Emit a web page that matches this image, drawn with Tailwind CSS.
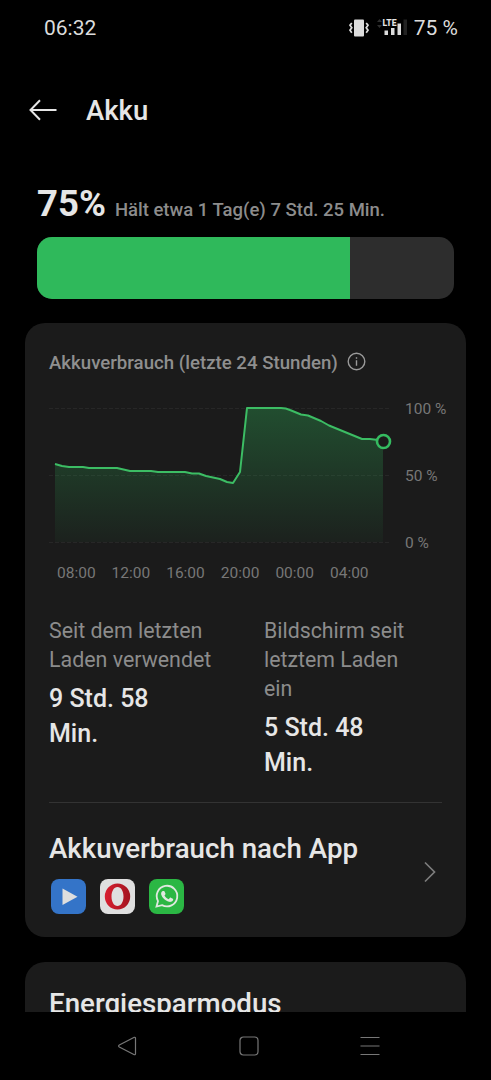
<!DOCTYPE html>
<html lang="de">
  <head>
    <meta charset="UTF-8" />
    <meta name="viewport" content="width=device-width, initial-scale=1.0" />
    <script src="https://cdn.jsdelivr.net/npm/@tailwindcss/browser@4"></script>
    <title>Akku</title>
  </head>
  <body class="bg-black">
    <div class="flex h-[1080px] w-[491px] flex-col overflow-hidden bg-black font-['Roboto',sans-serif] text-[#e6e6e6]">
      <!-- Status bar -->
      <header class="flex h-14 shrink-0 items-center justify-between pr-[33px] pl-11 text-[21px] text-[#dcdcdc]">
        <span class="pt-px">06:32</span>
        <div class="flex items-center">
          <svg class="mr-2 h-[18px] w-5" viewBox="0 0 20 18" fill="none">
            <rect x="5" y="0.5" width="10" height="17" rx="1" fill="#dcdcdc" />
            <path d="M2.8 4L1 6.200l1.800 2.600L1 11.200l1.800 2.600M17.200 4L19 6.200l-1.800 2.600L19 11.200l-1.800 2.600" stroke="#dcdcdc" stroke-width="1.700" />
          </svg>
          <svg class="mr-[7px] h-[20px] w-[30px]" viewBox="0 0 30 20">
            <path d="M0 4l2.500-3L5 4zM0 7l2.500 3L5 7z" fill="#2e2e2e" />
            <text x="5.500" y="7.500" font-size="9.500" font-weight="800" textLength="14" lengthAdjust="spacingAndGlyphs" fill="#e4e4e4">LTE</text>
            <path d="M7.500 12.500H11V17H7.500zM14 10h3.500v7H14zM20.500 5.500H24V17h-3.500z" fill="#dcdcdc" />
            <path d="M26.500 1.500H30V17h-3.500z" fill="#222" />
          </svg>
          <span class="pt-px">75 %</span>
        </div>
      </header>

      <!-- Title -->
      <div class="flex h-[108px] shrink-0 items-center gap-[29px] pl-[29px]">
        <svg class="h-6 w-7" viewBox="0 0 28 24" fill="none" stroke="#e6e6e6" stroke-width="2">
          <path d="M11 2.300L1.500 12l9.500 9.700M1.500 12H27.500" />
        </svg>
        <h1 class="pt-px text-[27.500px] font-medium">Akku</h1>
      </div>

      <main class="flex h-[848px] shrink-0 flex-col overflow-hidden px-[25px]">
        <!-- Charge level -->
        <div class="flex h-[73px] shrink-0 items-baseline gap-[9px] pt-4 pl-3">
          <span class="text-[36.500px] leading-[48px] font-bold">75%</span>
          <span class="text-[18.500px] font-medium text-[#8c8c8c]">Hält etwa 1 Tag(e) 7 Std. 25 Min.</span>
        </div>
        <div class="mx-3 h-[61.500px] shrink-0 overflow-hidden rounded-[15px] bg-[#2d2d2d]">
          <div class="h-full bg-[#2fb95b]" style="width: 75%"></div>
        </div>

        <!-- Usage card -->
        <section class="mt-[24.500px] flex h-[614px] shrink-0 flex-col rounded-[20px] bg-[#1b1b1b] px-6">
          <div class="mt-6 flex h-7 items-center gap-[9px]">
            <h2 class="pt-[3px] text-[18.650px] leading-6 font-medium text-[#8f8f8f]">Akkuverbrauch (letzte 24 Stunden)</h2>
            <svg class="h-[19px] w-[19px]" viewBox="0 0 19 19" fill="none" stroke="#9a9a9a" stroke-width="1.400">
              <circle cx="9.500" cy="9.500" r="8.300" />
              <path d="M9.500 8.300v5.400M9.500 5.200v1.600" />
            </svg>
          </div>
          <div class="mt-6 flex h-[150px]">
            <svg class="h-[150px] w-[345px] shrink-0" viewBox="49 399 345 150" fill="none">
              <defs>
                <linearGradient id="area" x1="0" y1="408" x2="0" y2="542" gradientUnits="userSpaceOnUse">
                  <stop offset="0" stop-color="#2fb95b" stop-opacity="0.320" />
                  <stop offset="1" stop-color="#2fb95b" stop-opacity="0.040" />
                </linearGradient>
              </defs>
              <path d="M49 408.500H389M49 475.500H389M49 542.500H389" stroke="#272727" stroke-dasharray="4 2" />
              <path d="M55 464L62 466L69 467H83L89 468H117L130 471H151L158 472H185L192 473.500H199L206 476L220 479L227 482L233 483L240 472L247 408H281Q286 408 290 410L301 414.500L308 415.500L321 421L329 425.500L362 439H370L378 440L383 441.500V542H55Z" fill="url(#area)" />
              <path d="M55 464L62 466L69 467H83L89 468H117L130 471H151L158 472H185L192 473.500H199L206 476L220 479L227 482L233 483L240 472L247 408H281Q286 408 290 410L301 414.500L308 415.500L321 421L329 425.500L362 439H370L378 440" stroke="#3cbd64" stroke-width="2" stroke-linejoin="round" />
              <circle cx="383.500" cy="441.500" r="6.500" fill="#1b1b1b" stroke="#35bb60" stroke-width="2.600" />
            </svg>
            <div class="flex h-[154px] shrink-0 flex-col justify-between pl-[11px] text-[15.500px] leading-5 text-[#777]">
              <span>100 %</span>
              <span>50 %</span>
              <span>0 %</span>
            </div>
          </div>
          <div class="mt-[14px] ml-2 flex h-5 gap-4 text-[15.500px] leading-5 text-[#777]">
            <span class="w-[38.600px]">08:00</span>
            <span class="w-[38.600px]">12:00</span>
            <span class="w-[38.600px]">16:00</span>
            <span class="w-[38.600px]">20:00</span>
            <span class="w-[38.600px]">00:00</span>
            <span class="w-[38.600px]">04:00</span>
          </div>

          <div class="mt-[33px] flex h-[186px] shrink-0 gap-[43px]">
            <div class="w-[172px]">
              <p class="text-[21.400px] leading-[29px] text-[#8c8c8c]">Seit dem letzten Laden verwendet</p>
              <p class="mt-[7px] w-[120px] text-[25px] leading-[35px] font-medium">9 Std. 58 Min.</p>
            </div>
            <div class="w-[160px]">
              <p class="text-[21.300px] leading-[29px] text-[#8c8c8c]">Bildschirm seit letztem Laden ein</p>
              <p class="mt-[7px] w-[120px] text-[25px] leading-[35px] font-medium">5 Std. 48 Min.</p>
            </div>
          </div>

          <div class="flex items-center justify-between border-t border-[#333] pt-[29px]">
            <div>
              <h2 class="text-[27.700px] leading-[34px] font-medium">Akkuverbrauch nach App</h2>
              <div class="mt-[13px] flex gap-[14px] pl-[1.500px]">
                <svg class="h-[35px] w-[35px]" viewBox="0 0 35 35">
                  <rect width="35" height="35" rx="8" fill="#3474c8" />
                  <path d="M11.500 9.500v16.500l15-8.200z" fill="#dedede" />
                </svg>
                <svg class="h-[35px] w-[35px]" viewBox="0 0 35 35">
                  <defs>
                    <linearGradient id="opera" x1="0" y1="0" x2="1" y2="0">
                      <stop offset="0" stop-color="#d81f30" />
                      <stop offset="1" stop-color="#a3141f" />
                    </linearGradient>
                  </defs>
                  <rect width="35" height="35" rx="8" fill="#dfdfdf" />
                  <path fill="url(#opera)" fill-rule="evenodd" d="M17.500 4.500a12.700 13 0 1 0 0 26a12.700 13 0 1 0 0-26zM17.500 8c3.600 0 6 4.200 6 9.500s-2.400 9.500-6 9.500s-6-4.200-6-9.500s2.400-9.500 6-9.500z" />
                </svg>
                <svg class="h-[35px] w-[35px]" viewBox="0 0 35 35">
                  <rect width="35" height="35" rx="8" fill="#2bb744" />
                  <path d="M7.500 27.500l1.500-5.400a10.300 10.300 0 1 1 4 4z" fill="none" stroke="#e0e8e0" stroke-width="1.800" />
                  <path d="M13.800 12h1c.5 0 .7.300.9.800l.8 2c.2.500-.5 1.100-1 1.700c1 1.800 2.300 3 4.100 3.800l1.200-1.400c.3-.4.600-.4 1-.2l2 1c.5.300.5.800.2 1.500c-.5 1.300-2.400 2-4 1.600c-4.100-1.200-7-4.500-7.800-7.300c-.4-1.400.4-3.200 1.600-3.500z" fill="#e0e8e0" />
                </svg>
              </div>
            </div>
            <svg class="mr-[6px] mb-[2px] h-[22px] w-3" viewBox="0 0 12 22" fill="none" stroke="#7d7d7d" stroke-width="1.700">
              <path d="M1 1.500L10.500 11L1 20.500" />
            </svg>
          </div>
        </section>

        <!-- Power saving card -->
        <section class="mt-[25px] h-[120px] shrink-0 rounded-[20px] bg-[#1b1b1b] px-6 pt-[25px]">
          <h2 class="text-[27.700px] leading-[34px] font-medium">Energiesparmodus</h2>
        </section>
      </main>

      <!-- Navigation bar -->
      <nav class="flex h-[68px] shrink-0 items-center justify-between pr-[111px] pl-[118px]">
        <svg class="h-5 w-[19px]" viewBox="0 0 19 20" fill="none" stroke="#777" stroke-width="1.200" stroke-linejoin="round">
          <path d="M16.300 1.300L1.300 9q-1.400 1 0 2L16.300 18.700q1.200.3 1.200-1V2.300q0-1.300-1.200-1z" />
        </svg>
        <svg class="h-5 w-5" viewBox="0 0 20 20" fill="none" stroke="#777" stroke-width="1.200">
          <rect x="1" y="1" width="18" height="18" rx="3.500" />
        </svg>
        <svg class="h-5 w-5" viewBox="0 0 20 20" fill="none" stroke="#777" stroke-width="1.200">
          <path d="M.5 1.500h19M.5 10h19M.5 18.500h19" />
        </svg>
      </nav>
    </div>
  </body>
</html>
